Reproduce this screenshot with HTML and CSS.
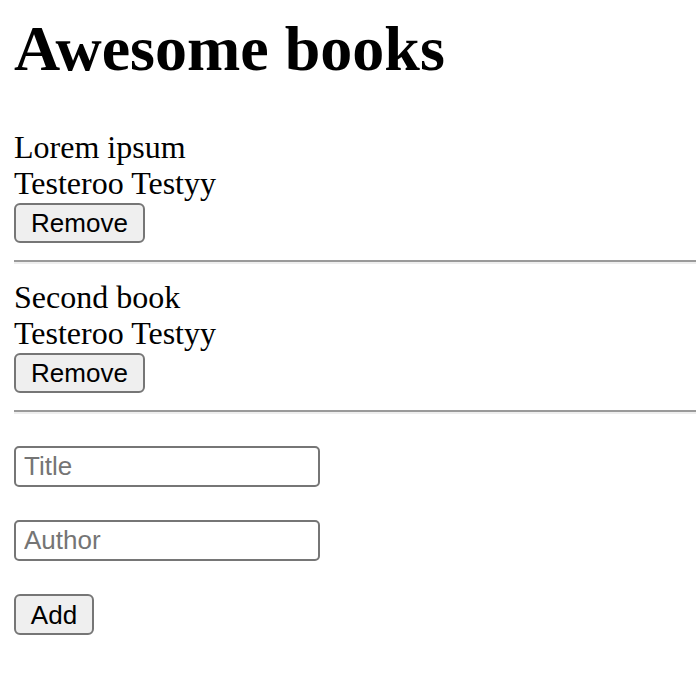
FILE: index.html
```html
<!DOCTYPE html>
<html>
<head>
<meta charset="utf-8">
<link rel="stylesheet" href="styles.css">
</head>
<body>
<h1 class="title">Awesome books</h1>
<div class="book">
  <div class="line">Lorem ipsum</div>
  <div class="line">Testeroo Testyy</div>
  <button class="btn remove">Remove</button>
</div>
<hr class="sep">
<div class="book">
  <div class="line">Second book</div>
  <div class="line">Testeroo Testyy</div>
  <button class="btn remove">Remove</button>
</div>
<hr class="sep">
<form class="form">
  <input class="field" type="text" placeholder="Title">
  <input class="field" type="text" placeholder="Author">
  <button class="btn add" type="button">Add</button>
</form>
</body>
</html>
```
FILE: styles.css
```css
html, body {
  background: #fff;
}
body {
  margin: 0;
  padding: 12px 0 0 14px;
  font-family: "Liberation Serif", "Times New Roman", serif;
  font-size: 32px;
  color: #000;
}
.title {
  margin: 0 0 44px 0;
  font-size: 64px;
  font-weight: bold;
  line-height: 73px;
}
.book {
  display: flex;
  flex-direction: column;
  align-items: flex-start;
}
.line {
  line-height: 36px;
  height: 36px;
}
.btn {
  font-family: "Liberation Sans", Arial, sans-serif;
  font-size: 26px;
  color: #000;
  background: #efefef;
  border: 2px solid #767676;
  border-radius: 6px;
  height: 40px;
  padding: 0 14px;
  margin: 0;
  line-height: 1;
}
.remove {
  margin-top: 2px;
  width: 131px;
}
.sep {
  margin: 17px 0 15px 0;
  border: 0;
  border-top: 2px solid #9a9a9a;
  border-bottom: 2px solid #eeeeee;
  height: 0;
}
.form {
  display: flex;
  flex-direction: column;
  align-items: flex-start;
  gap: 33px;
  padding-top: 17px;
  margin: 0;
}
.field {
  box-sizing: border-box;
  width: 306px;
  height: 41px;
  margin: 0;
  padding: 0 8px;
  border: 2px solid #767676;
  border-radius: 5px;
  font-family: "Liberation Sans", Arial, sans-serif;
  font-size: 26px;
  color: #000;
}
.field::placeholder {
  color: #757575;
}
.add {
  width: 80px;
  height: 41px;
  padding: 0;
}
```
